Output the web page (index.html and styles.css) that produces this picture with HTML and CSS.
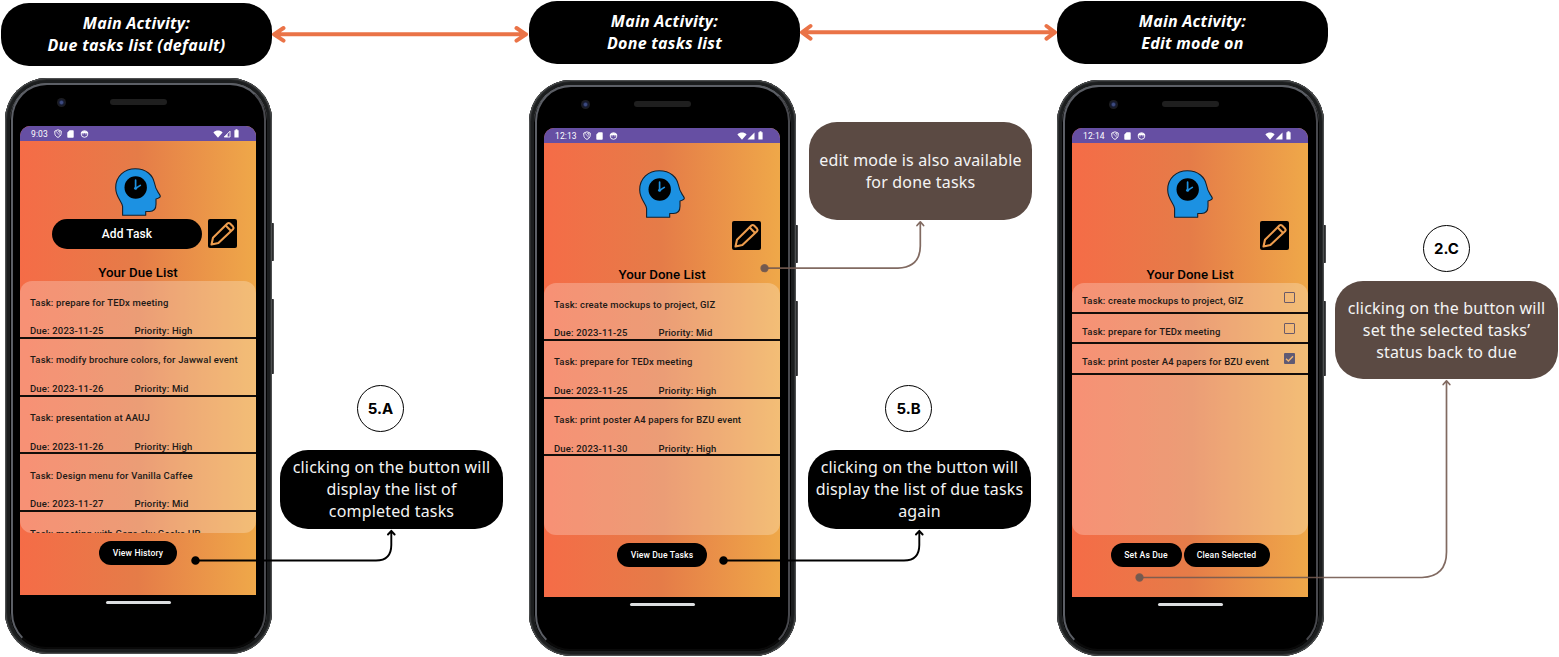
FILE: index.html
```
<!DOCTYPE html>
<html lang="en">
<head>
<meta charset="utf-8">
<title>Main Activity flow</title>
<link rel="stylesheet" href="styles.css">
</head>
<body>
<svg class="defs" width="0" height="0" aria-hidden="true">
  <symbol id="shield" viewBox="0 0 8 9"><path d="M4 .8 7.200 2v2.200C7.200 6.200 5.900 7.700 4 8.400 2.100 7.700.8 6.200.8 4.200V2z" fill="none" stroke="#fff" stroke-width=".9"/><path d="M2 2.200 6.300 7M4.200 2.500h1.500v2" stroke="#fff" stroke-width=".7" fill="none"/></symbol>
  <symbol id="sd" viewBox="0 0 7 8"><path d="M2.600.3H6q.7 0 .7.7v6q0 .7-.7.7H1q-.7 0-.7-.7V2.600z" fill="#fff"/></symbol>
  <symbol id="face" viewBox="0 0 9 8"><circle cx="4.500" cy="4" r="3.300" fill="none" stroke="#fff" stroke-width=".9"/><path d="M.6 3.200C1.500.2 7.500.2 8.400 3.200z" fill="#fff"/><path d="M2.400 3.900h1.400M5.200 3.900h1.400" stroke="#fff" stroke-width=".8"/></symbol>
  <symbol id="wifi" viewBox="0 0 10 8"><path d="M.4 2.400C3-.2 7-.2 9.600 2.400L5 7.800z" fill="#fff"/></symbol>
  <symbol id="cell" viewBox="0 0 8 8"><path d="M7.500.5v7H.5z" fill="#fff"/></symbol>
  <symbol id="cell-low" viewBox="0 0 8 8"><path d="M7 1.200V7H1.200z" fill="none" stroke="#fff" stroke-width=".9"/><path d="M4.600 3.800V7H1.200z" fill="#fff"/></symbol>
  <symbol id="battery" viewBox="0 0 5 9"><path d="M1.500.3h2v1h1.100v7.200H.4V1.300h1.100z" fill="#fff"/></symbol>
  <symbol id="head" viewBox="0 0 46 48">
    <path d="M7.600 47.200V38.500C7.600 34 .7 29.500.7 19.700.7 8 9.500.7 20.400.7 31.500.7 37.800 7.500 39.300 14.500c.8 3.800 1.700 6.600 3.600 9.400 1.400 2 2.400 3.400 2.400 4.400 0 1.400-1.600 2-4.300 2.700v5.200c0 4.600-2.600 7.300-6.600 7.300h-3.700v3.700z" fill="#1c91e2" stroke="#15202c" stroke-width="1.100" stroke-linejoin="round"/>
    <circle cx="20.700" cy="19.500" r="11.200" fill="#000"/>
    <path d="M20.600 12.200v8.200l4.700-3" fill="none" stroke="#1c91e2" stroke-width="1.700" stroke-linecap="round" stroke-linejoin="round"/><circle cx="20.600" cy="20.300" r="1.500" fill="#1c91e2"/>
  </symbol>
  <symbol id="pencil" viewBox="0 0 29 29">
    <rect width="29" height="29" rx="2" fill="#000"/>
    <g fill="none" stroke="#ed9c4d" stroke-width="2.100" stroke-linejoin="round"><path d="M3.500 25.500 5 18.800 19.400 4.600q1.300-1.200 2.600 0l3 3q1.200 1.300 0 2.600L10.400 24z"/><path d="m17.700 6.500 5.400 5.400"/></g>
  </symbol>
</svg>

<main class="board">
  <h2 class="title title-due">Main Activity:<br>Due tasks list (default)</h2>
  <h2 class="title title-done">Main Activity:<br>Done tasks list</h2>
  <h2 class="title title-edit">Main Activity:<br>Edit mode on</h2>

  <section class="phone phone-due">
    <i class="key key-power"></i><i class="key key-volume"></i>
    <div class="body">
      <div class="bezel"><i class="camera"></i><i class="speaker"></i></div>
      <div class="screen">
        <div class="status"><span class="time">9:03</span><svg class="s-shield"><use href="#shield"/></svg><svg class="s-sd"><use href="#sd"/></svg><svg class="s-face"><use href="#face"/></svg><span class="fill"></span><svg class="s-wifi"><use href="#wifi"/></svg><svg class="s-cell"><use href="#cell-low"/></svg><svg class="s-bat"><use href="#battery"/></svg></div>
        <svg class="logo"><use href="#head"/></svg>
        <div class="tools"><button class="add">Add Task</button><svg class="pencil"><use href="#pencil"/></svg></div>
        <h3 class="heading">Your Due List</h3>
        <div class="panel">
          <div class="task"><p>Task: prepare for TEDx meeting</p><p class="meta"><span>Due: 2023-11-25</span><span>Priority: High</span></p></div>
          <div class="task"><p>Task: modify brochure colors, for Jawwal event</p><p class="meta"><span>Due: 2023-11-26</span><span>Priority: Mid</span></p></div>
          <div class="task"><p>Task: presentation at AAUJ</p><p class="meta"><span>Due: 2023-11-26</span><span>Priority: High</span></p></div>
          <div class="task"><p>Task: Design menu for Vanilla Caffee</p><p class="meta"><span>Due: 2023-11-27</span><span>Priority: Mid</span></p></div>
          <div class="task"><p>Task: meeting with Gaza sky Geeks HR</p></div>
        </div>
        <div class="actions"><button class="w78">View History</button></div>
      </div>
      <i class="home"></i>
    </div>
  </section>

  <section class="phone phone-done">
    <i class="key key-power"></i><i class="key key-volume"></i>
    <div class="body">
      <div class="bezel"><i class="camera"></i><i class="speaker"></i></div>
      <div class="screen">
        <div class="status"><span class="time">12:13</span><svg class="s-shield"><use href="#shield"/></svg><svg class="s-sd"><use href="#sd"/></svg><svg class="s-face"><use href="#face"/></svg><span class="fill"></span><svg class="s-wifi"><use href="#wifi"/></svg><svg class="s-cell"><use href="#cell"/></svg><svg class="s-bat"><use href="#battery"/></svg></div>
        <svg class="logo"><use href="#head"/></svg>
        <div class="tools"><svg class="pencil"><use href="#pencil"/></svg></div>
        <h3 class="heading">Your Done List</h3>
        <div class="panel">
          <div class="task"><p>Task: create mockups to project, GIZ</p><p class="meta"><span>Due: 2023-11-25</span><span>Priority: Mid</span></p></div>
          <div class="task"><p>Task: prepare for TEDx meeting</p><p class="meta"><span>Due: 2023-11-25</span><span>Priority: High</span></p></div>
          <div class="task"><p>Task: print poster A4 papers for BZU event</p><p class="meta"><span>Due: 2023-11-30</span><span>Priority: High</span></p></div>
        </div>
        <div class="actions"><button class="w90">View Due Tasks</button></div>
      </div>
      <i class="home"></i>
    </div>
  </section>

  <section class="phone phone-edit">
    <i class="key key-power"></i><i class="key key-volume"></i>
    <div class="body">
      <div class="bezel"><i class="camera"></i><i class="speaker"></i></div>
      <div class="screen">
        <div class="status"><span class="time">12:14</span><svg class="s-shield"><use href="#shield"/></svg><svg class="s-sd"><use href="#sd"/></svg><svg class="s-face"><use href="#face"/></svg><span class="fill"></span><svg class="s-wifi"><use href="#wifi"/></svg><svg class="s-cell"><use href="#cell"/></svg><svg class="s-bat"><use href="#battery"/></svg></div>
        <svg class="logo"><use href="#head"/></svg>
        <div class="tools"><svg class="pencil"><use href="#pencil"/></svg></div>
        <h3 class="heading">Your Done List</h3>
        <div class="panel">
          <div class="pick"><p>Task: create mockups to project, GIZ</p><i class="box"></i></div>
          <div class="pick"><p>Task: prepare for TEDx meeting</p><i class="box"></i></div>
          <div class="pick"><p>Task: print poster A4 papers for BZU event</p><i class="box checked"><svg viewBox="0 0 11 11"><path d="m2 5.700 2.400 2.300L9 3.200" fill="none" stroke="#f0b573" stroke-width="1.400"/></svg></i></div>
        </div>
        <div class="actions"><button class="w71">Set As Due</button><button class="w86">Clean Selected</button></div>
      </div>
      <i class="home"></i>
    </div>
  </section>

  <div class="step step-a">5.A</div>
  <div class="step step-b">5.B</div>
  <div class="step step-c">2.C</div>
  <div class="note note-a">clicking on the button will<br>display the list of<br>completed tasks</div>
  <div class="note note-b">clicking on the button will<br>display the list of due tasks<br>again</div>
  <div class="note brown note-edit">edit mode is also available<br>for done tasks</div>
  <div class="note brown note-c">clicking on the button will<br>set the selected tasks’<br>status back to due</div>

  <svg class="links" viewBox="0 0 1559 657" fill="none" stroke-linecap="round" stroke-linejoin="round">
    <g stroke="#ea7347" stroke-width="4">
      <path d="M275 34.300H526M283.500 28 274 34.300l9.500 6.300M516.500 28l9.500 6.300-9.500 6.300"/>
      <path d="M803 32.300h251M810.500 26 802 32.300l8.500 6.300M1046.500 26l8.500 6.300-8.500 6.300"/>
    </g>
    <g stroke="#000" stroke-width="1.900">
      <path d="M195.500 560.500H376Q391.300 560.500 391.300 545V531M388 534.500l3.300-3.700 3.300 3.700"/><circle cx="195.500" cy="560.500" r="3.300" fill="#000"/>
      <path d="M723.500 560.500H904Q919.300 560.500 919.300 545V531M916 534.500l3.300-3.700 3.300 3.700"/><circle cx="723.500" cy="560.500" r="3.300" fill="#000"/>
    </g>
    <g stroke="#735a50" stroke-opacity=".9" stroke-width="1.700">
      <path d="M764.500 268.200H898Q920.300 267 920.300 246V222M917 225.500l3.300-3.700 3.300 3.700"/><circle cx="764.500" cy="268.200" r="3.300" fill="#735a50"/>
      <path d="M1139.500 577.500H1422Q1446.500 576.500 1446.500 552V381M1443.200 384.500l3.300-3.700 3.300 3.700"/><circle cx="1139.500" cy="577.500" r="3.300" fill="#735a50"/>
    </g>
  </svg>
</main>
</body>
</html>
```
FILE: styles.css
```
* { box-sizing: border-box; }
body { margin: 0; background: #fff; overflow: hidden; }
h2, h3, p { margin: 0; font: inherit; }
i { display: block; }
.defs { position: absolute; }
.board { position: relative; width: 1559px; height: 657px; overflow: hidden; font-family: Roboto, sans-serif; }

/* screen titles */
.title {
  position: absolute; width: 271px; height: 63px; padding-bottom: 2px; border-radius: 28px; background: #000; color: #fff;
  display: flex; align-items: center; justify-content: center; text-align: center;
  font: italic 700 16px/22px "Open Sans", "Noto Sans", sans-serif; letter-spacing: .27px;
}
.title-due { left: 1px; top: 3px; }
.title-done { left: 529px; top: 1px; }
.title-edit { left: 1057px; top: 1px; }

/* phones */
.phone { position: absolute; width: 269px; height: 576px; }
.phone-due { left: 5px; top: 78px; }
.phone-done { left: 529px; top: 80px; }
.phone-edit { left: 1057px; top: 80px; }
.key { position: absolute; right: 0; width: 5px; background: #2b2c2d; border-right: 1px solid #4b4c4e; border-radius: 1px; }
.key-power { top: 145px; height: 38px; }
.key-volume { top: 221px; height: 75px; }
.body {
  position: relative; width: 267px; height: 576px; padding: 0 16px 0 15px; background: #000; border-radius: 42px;
  display: flex; flex-direction: column; align-items: center;
  box-shadow: inset 0 0 0 1px #4d4f50, inset 0 0 0 2px #2b2d2e, inset 0 0 0 5px #1b1d1e, inset 0 1px 0 5px #66686b;
}
.body::before {
  content: ""; position: absolute; inset: 5px 6px 5px 6px; border-radius: 36px;
  border: 2px solid #5c5f66; border-bottom-color: #090909; border-right-color: #48494e;
}
.bezel { width: 100%; height: 48px; display: flex; align-items: center; padding-left: 37px; gap: 44px; }
.camera { width: 9px; height: 9px; border-radius: 50%; background: radial-gradient(circle, #3c4a80 0 1.2px, #151a30 2.500px, #1c1c20 4px); }
.speaker { width: 57px; height: 6px; border-radius: 3px; background: #1f1f1f; }
.screen {
  position: relative; width: 236px; height: 469px; border-radius: 10px 10px 0 0; overflow: hidden;
  background: linear-gradient(90deg, #f56c47, #e57c48 50%, #efa849);
  display: flex; flex-direction: column; align-items: center;
}
.home { width: 65px; height: 3px; margin-top: 6px; border-radius: 2px; background: #dcdee0; }

/* status bar */
.status { width: 100%; height: 15px; flex: none; padding: 0 17px 0 11px; background: #664fa3; color: #fff; display: flex; align-items: center; font-size: 8.500px; }
.time { margin-right: 6px; letter-spacing: .1px; }
.fill { flex: 1; }
.s-shield { width: 8px; height: 9px; margin-right: 5px; }
.s-sd { width: 7px; height: 8px; margin-right: 6px; }
.s-face { width: 9px; height: 8px; }
.s-wifi { width: 10px; height: 8px; }
.s-cell { width: 8px; height: 8px; margin-right: 3px; }
.s-bat { width: 5px; height: 9px; }

.logo { flex: none; width: 46px; height: 48px; margin-top: 27px; }
.tools { width: 100%; height: 30px; flex: none; margin-top: 3px; padding-right: 19px; display: flex; justify-content: flex-end; gap: 6px; }
.pencil { width: 29px; height: 29px; }
button { border: 0; padding: 0; border-radius: 15px; background: #000; color: #fff; font: 500 8.600px Roboto, sans-serif; letter-spacing: .15px; }
.add { width: 150px; height: 30px; font-size: 12px; letter-spacing: .1px; }
.heading { flex: none; height: 32px; padding-top: 16px; font: 500 13.300px/16px Roboto, sans-serif; letter-spacing: .05px; color: #000; }

.panel { flex: none; width: 100%; height: 251.500px; border-radius: 12px; overflow: hidden; background: rgba(255,255,255,.25); color: #211916; font-size: 9.500px; font-weight: 500; letter-spacing: .17px; white-space: nowrap; }
.task { height: 57.800px; padding: 15.500px 0 0 10px; line-height: 12px; border-bottom: 2px solid #130d0a; }
.meta { display: flex; margin-top: 16.500px; }
.meta span:first-child { width: 104.500px; }
.pick { height: 30.500px; padding: 7px 13.500px 0 10px; border-bottom: 2px solid #130d0a; display: flex; align-items: center; justify-content: space-between; }
.box { width: 11px; height: 11px; border: 1.300px solid #6a5a69; border-radius: 1px; margin-top: -6px; }
.checked { background: #5f5a74; border: 0; }
.checked svg { display: block; width: 11px; height: 11px; }

.actions { margin-top: 8.500px; display: flex; gap: 2px; }
.actions button { height: 24px; }
.w78 { width: 78px; }
.w90 { width: 90px; }
.w71 { width: 71px; }
.w86 { width: 86px; }

/* annotations */
.step { position: absolute; width: 47px; height: 47px; border: 1px solid #000; border-radius: 50%; display: flex; align-items: center; justify-content: center; font: 700 15px Inter, sans-serif; }
.step-a { left: 357px; top: 385px; }
.step-b { left: 885px; top: 385px; }
.step-c { left: 1423px; top: 225px; }
.note { position: absolute; width: 223px; height: 79px; border-radius: 28px; background: #000; color: #f4f4f4; display: flex; align-items: center; justify-content: center; text-align: center; font: 400 16px/22px "Noto Sans", sans-serif; letter-spacing: .18px; white-space: nowrap; }
.note-a { left: 280px; top: 450px; padding-bottom: 1px; }
.note-b { left: 808px; top: 450px; padding-bottom: 1px; }
.brown { height: 98px; background: #5b4a43; }
.note-edit { left: 809px; top: 122px; }
.note-c { left: 1335px; top: 281px; }
.links { position: absolute; inset: 0; width: 1559px; height: 657px; }
```
